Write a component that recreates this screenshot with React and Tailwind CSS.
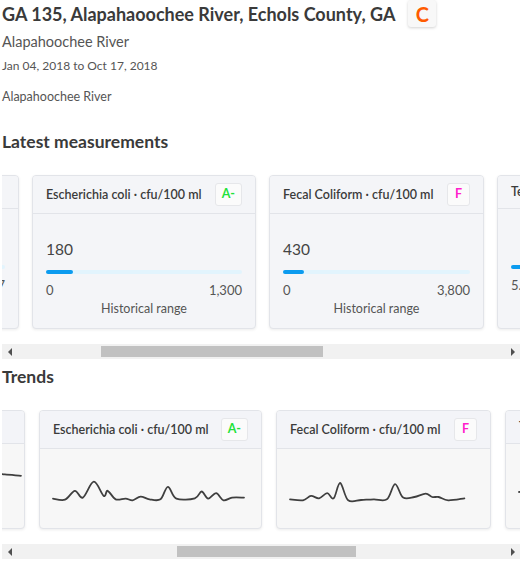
import React, { useEffect, useRef } from 'react';

const measurements = [
    { title: 'Dissolved Oxygen · mg/l', value: '', min: '2.1', max: '9.7', pct: 62, w: 'w-[200px]' },
    { title: 'Escherichia coli · cfu/100 ml', grade: 'A-', gradeColor: 'text-[#1fe23a]', value: '180', min: '0', max: '1,300', pct: 14, w: 'w-[224px]' },
    { title: 'Fecal Coliform · cfu/100 ml', grade: 'F', gradeColor: 'text-[#ff1ecb]', value: '430', min: '0', max: '3,800', pct: 11, w: 'w-[215px]' },
    { title: 'Temperature · °C', value: '', min: '5.3', max: '29.8', pct: 66, w: 'w-[200px]' },
    { title: 'pH · units', value: '', min: '4.2', max: '7.3', pct: 60, w: 'w-[220px]' },
];

// sparkline points, roughly traced from the charts
const spark1 = [[0, 21.6], [12, 22.7], [22, 13.8], [30, 20.6], [41, 4.7], [51, 18.9], [55, 13.8], [63, 22.3], [73, 21.6], [80, 23.3], [88, 19.6], [97, 22.3], [108, 22.3], [115.5, 9.8], [124, 21.6], [142.6, 21.3], [149.4, 14.5], [156, 21.6], [164, 16.2], [171.4, 23.3], [180, 20.6], [192, 20.6]];
const spark2 = [[0, 22.3], [13.6, 23.3], [22, 18.9], [30.5, 21.3], [39, 16.2], [45.8, 21.3], [52.6, 6], [61, 23.3], [74.6, 23], [88, 22.3], [101.7, 22.3], [110.2, 7.1], [118.7, 20.6], [130.5, 20], [142.4, 16.6], [149.2, 20], [156, 20], [166, 23.3], [183, 21.3]];

const smooth = (pts) => {
    let d = `M${pts[0][0]},${pts[0][1]}`;
    for (let i = 0; i < pts.length - 1; i++) {
        const p0 = pts[i - 1] || pts[i];
        const p1 = pts[i];
        const p2 = pts[i + 1];
        const p3 = pts[i + 2] || p2;
        const c1 = [p1[0] + (p2[0] - p0[0]) / 6, p1[1] + (p2[1] - p0[1]) / 6];
        const c2 = [p2[0] - (p3[0] - p1[0]) / 6, p2[1] - (p3[1] - p1[1]) / 6];
        d += ` C${c1[0].toFixed(1)},${c1[1].toFixed(1)} ${c2[0].toFixed(1)},${c2[1].toFixed(1)} ${p2[0]},${p2[1]}`;
    }
    return d;
};

const trends = [
    { title: 'Dissolved Oxygen · mg/l', w: 'w-[220px]', line: [[0, 12], [70, 9], [140, 13], [188, 10]] },
    { title: 'Specific Conductance · µS/cm', w: 'w-[238px]', line: [[0, 5], [60, 2], [130, 1], [175, 1.6], [190, 2.4], [205, 3.8]] },
    { title: 'Escherichia coli · cfu/100 ml', grade: 'A-', gradeColor: 'text-[#1fe23a]', w: 'w-[223px]', line: spark1 },
    { title: 'Fecal Coliform · cfu/100 ml', grade: 'F', gradeColor: 'text-[#ff1ecb]', w: 'w-[215px]', line: spark2 },
    { title: 'Temperature · °C', w: 'w-[220px]', line: [[0, 20], [90, 14], [186, 21]] },
    { title: 'pH · units', w: 'w-[200px]', line: [[0, 18], [90, 19], [166, 17]] },
];

const Grade = ({ grade, color }) => (
    <span className={`flex h-[23px] min-w-[23px] items-center justify-center rounded-[3px] border border-[#e6e7ea] bg-[#fbfbfb] px-[6px] text-[12.5px] font-bold ${color}`}>
        {grade}
    </span>
);

const CardHeader = ({ item, bg }) => (
    <div className={`flex items-center justify-between gap-[10px] border-b border-[#e2e4e9] px-[13px] py-[7px] ${bg}`}>
        <span className="whitespace-nowrap text-[12.5px] font-semibold leading-[18px] text-[#3b3b3b]">{item.title}</span>
        {item.grade && <Grade grade={item.grade} color={item.gradeColor} />}
    </div>
);

// the page's horizontal scrollbar, drawn by hand
const ScrollBar = ({ thumb }) => (
    <div className="flex h-[15px] items-center bg-[#f1f1f1]">
        <div className="flex h-full w-[15px] items-center justify-center">
            <span className="h-0 w-0 border-y-[4px] border-r-[4px] border-y-transparent border-r-[#505050]" />
        </div>
        <div className="flex h-full flex-1 items-center">
            <div className={`h-[11px] bg-[#c1c1c1] ${thumb}`} />
        </div>
        <div className="flex h-full w-[15px] items-center justify-center">
            <span className="h-0 w-0 border-y-[4px] border-l-[4px] border-y-transparent border-l-[#505050]" />
        </div>
    </div>
);

const App = () => {
    const measRef = useRef(null);
    const trendRef = useRef(null);

    useEffect(() => {
        if (measRef.current) measRef.current.scrollLeft = 196;
        if (trendRef.current) trendRef.current.scrollLeft = 463;
    }, []);

    return (
        <div className="w-[531px] bg-white pl-[2px] pr-[11px] font-['Lato','Noto_Sans',sans-serif] text-[#3b3b3b]">
            <div className="flex items-center gap-[13px]">
                <h1 className="whitespace-nowrap text-[18px] font-bold leading-[26px] text-[#3a3a3a]">
                    GA 135, Alapahaoochee River, Echols County, GA
                </h1>
                <span className="flex h-[27px] w-[28px] items-center justify-center rounded-[3px] bg-[#f8f8f8] text-[20px] font-bold text-[#ff5b00] shadow-[0_1px_3px_rgba(0,0,0,0.18)]">
                    C
                </span>
            </div>
            <p className="mt-[5px] text-[14.5px] leading-[20px] text-[#555]">Alapahoochee River</p>
            <p className="mt-[5px] text-[12px] leading-[18px] text-[#555]">Jan 04, 2018 to Oct 17, 2018</p>
            <p className="mt-[14px] text-[12.5px] leading-[16px] text-[#555]">Alapahoochee River</p>

            <h2 className="mt-[25px] text-[17.5px] font-bold leading-[24px] text-[#3a3a3a]">Latest measurements</h2>
            <div ref={measRef} className="mt-[18px] overflow-hidden">
                <div className="flex w-max gap-[13px] pb-[15px] pl-[13px] pr-[15px] pt-[3px]">
                    {measurements.map((m) => (
                        <div key={m.title} className={`${m.w} flex flex-col overflow-hidden rounded-[4px] border border-[#e2e4e9] bg-[#f4f5f8] shadow-[0_1px_3px_rgba(0,0,0,0.08)]`}>
                            <CardHeader item={m} bg="bg-[#f4f5f8]" />
                            <div className="px-[13px] pb-[11px] pt-[25px]">
                                <div className="h-[20px] text-[15.5px] leading-[20px] text-[#444]">{m.value}</div>
                                <div className="mt-[11px] h-[4px] w-full rounded-full bg-[#e2f4fd]">
                                    <div className="h-full rounded-full bg-[#0c9bef]" style={{ width: `${m.pct}%` }} />
                                </div>
                                <div className="mt-[8px] flex justify-between text-[13px] leading-[16px] text-[#555]">
                                    <span>{m.min}</span>
                                    <span>{m.max}</span>
                                </div>
                                <div className="mt-[3px] text-center text-[12.5px] leading-[16px] text-[#555]">Historical range</div>
                            </div>
                        </div>
                    ))}
                </div>
            </div>
            <ScrollBar thumb="ml-[84px] w-[222px]" />

            <h2 className="mt-[6px] text-[17.5px] font-bold leading-[24px] text-[#3a3a3a]">Trends</h2>
            <div ref={trendRef} className="mt-[21px] overflow-hidden">
                <div className="flex w-max gap-[14px] pb-[15px] pl-[14px] pr-[12px]">
                    {trends.map((t) => (
                        <div key={t.title} className={`${t.w} flex flex-col overflow-hidden rounded-[4px] border border-[#e2e4e9] bg-[#f7f7f7] shadow-[0_1px_3px_rgba(0,0,0,0.08)]`}>
                            <CardHeader item={t} bg="bg-[#f3f4f8]" />
                            <div className="flex flex-1 items-start pb-[21px] pl-[13px] pr-[17px] pt-[28px]">
                                <svg className="h-[30px] w-full overflow-visible" viewBox="0 0 192 30" preserveAspectRatio="none">
                                    <path d={smooth(t.line)} fill="none" stroke="#3f3f3f" strokeWidth="1.8" strokeLinejoin="round" strokeLinecap="round" />
                                </svg>
                            </div>
                        </div>
                    ))}
                </div>
            </div>
            <ScrollBar thumb="ml-[160px] w-[179px]" />
        </div>
    );
};

export default App;
